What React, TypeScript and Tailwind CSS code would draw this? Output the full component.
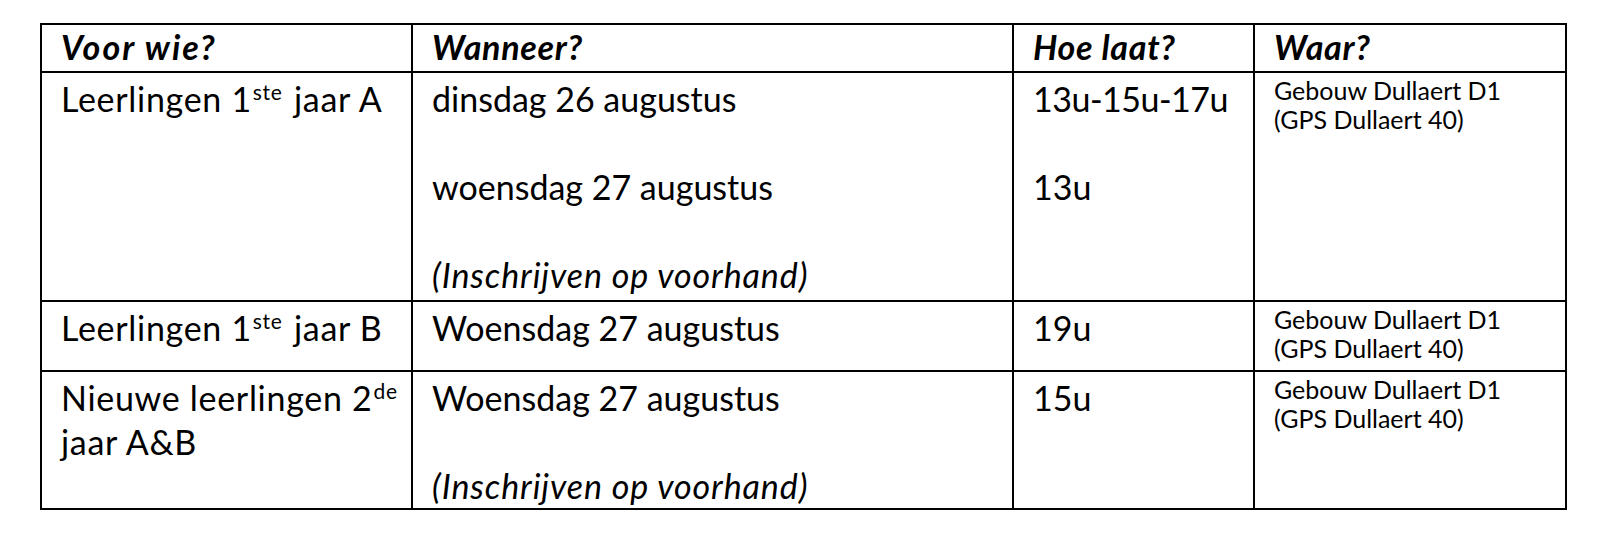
import type { ReactNode } from 'react';

const font = { fontFamily: 'Lato, "Noto Sans", sans-serif' };

function Cell({
  children,
  small = false,
  wide = false,
}: {
  children?: ReactNode;
  small?: boolean;
  wide?: boolean;
}) {
  return (
    <td
      className={`border-2 border-black align-top pl-[19px] pr-2 ${
        small ? 'pt-[3px] text-[25px] leading-[29px]' : 'pt-[4px] text-[34px] leading-[44px]'
      } ${wide ? 'tracking-[0.7px] whitespace-nowrap' : ''}`}
    >
      {children}
    </td>
  );
}

function Place() {
  return (
    <>
      Gebouw Dullaert D1
      <br />
      (GPS Dullaert 40)
    </>
  );
}

function Sup({ children }: { children: ReactNode }) {
  return <sup className="text-[21px] relative -top-[12px] pl-[1px] pr-[2px]">{children}</sup>;
}

function Note() {
  return <span className="italic tracking-[0.9px]">(Inschrijven op voorhand)</span>;
}

export default function App() {
  const headers = ['Voor wie?', 'Wanneer?', 'Hoe laat?', 'Waar?'];

  return (
    <div className="min-h-screen bg-white text-black pt-[23px] pl-[40px]" style={font}>
      <table className="table-fixed border-collapse w-[1525px]">
        <colgroup>
          <col className="w-[371px]" />
          <col className="w-[601px]" />
          <col className="w-[241px]" />
          <col className="w-[312px]" />
        </colgroup>
        <tbody>
          {/* Header */}
          <tr className="h-[48px]">
            {headers.map((h, i) => (
              <td
                key={h}
                className={`border-2 border-black align-top pl-[19px] pt-0 text-[34px] leading-[44px] font-bold italic ${
                  i === 0 ? 'tracking-[2px]' : 'tracking-[0.7px]'
                }`}
              >
                {h}
              </td>
            ))}
          </tr>

          {/* Leerlingen 1ste jaar A */}
          <tr className="h-[229px]">
            <Cell wide>
              Leerlingen 1<Sup>ste</Sup> jaar A
            </Cell>
            <Cell>
              dinsdag 26 augustus
              <br />
              <br />
              woensdag 27 augustus
              <br />
              <br />
              <Note />
            </Cell>
            <Cell>
              <span className="tracking-[-0.5px]">13u-15u-17u</span>
              <br />
              <br />
              13u
            </Cell>
            <Cell small>
              <Place />
            </Cell>
          </tr>

          {/* Leerlingen 1ste jaar B */}
          <tr className="h-[70px]">
            <Cell wide>
              Leerlingen 1<Sup>ste</Sup> jaar B
            </Cell>
            <Cell>Woensdag 27 augustus</Cell>
            <Cell>19u</Cell>
            <Cell small>
              <Place />
            </Cell>
          </tr>

          {/* Nieuwe leerlingen */}
          <tr className="h-[136px]">
            <Cell wide>
              Nieuwe leerlingen 2<Sup>de</Sup>
              <br />
              jaar A&amp;B
            </Cell>
            <Cell>
              Woensdag 27 augustus
              <br />
              <br />
              <Note />
            </Cell>
            <Cell>15u</Cell>
            <Cell small>
              <Place />
            </Cell>
          </tr>
        </tbody>
      </table>
    </div>
  );
}
